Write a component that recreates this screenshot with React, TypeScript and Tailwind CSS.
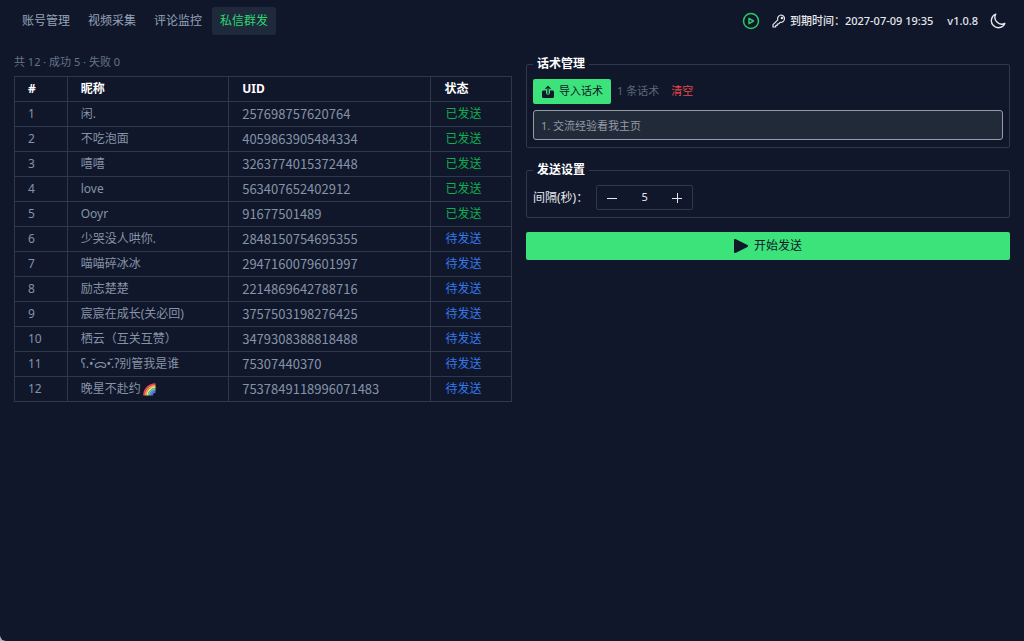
import { useState } from "react";

const tabs = ["账号管理", "视频采集", "评论监控", "私信群发"];

const users = [
  { name: "闲.", uid: "257698757620764", sent: true },
  { name: "不吃泡面", uid: "4059863905484334", sent: true },
  { name: "嘻嘻", uid: "3263774015372448", sent: true },
  { name: "love", uid: "563407652402912", sent: true },
  { name: "Ooyr", uid: "91677501489", sent: true },
  { name: "少哭没人哄你.", uid: "2848150754695355", sent: false },
  { name: "喵喵碎冰冰", uid: "2947160079601997", sent: false },
  { name: "励志楚楚", uid: "2214869642788716", sent: false },
  { name: "宸宸在成长(关必回)", uid: "3757503198276425", sent: false },
  { name: "栖云（互关互赞）", uid: "3479308388818488", sent: false },
  { name: "ʕ.•̆ᯅ•̆.ʔ别管我是谁", uid: "75307440370", sent: false },
  { name: "晚星不赴约", uid: "7537849118996071483", sent: false, rainbow: true },
];

const Rainbow = () => (
  <svg width="13" height="13" viewBox="0 0 13 13" fill="none" strokeWidth="1.7" role="img" aria-label="彩虹">
    <path d="M1 12.5C1 6 6 1 12.5 1" stroke="#e8455a" />
    <path d="M2.6 12.5c0-5.500 4.400-9.900 9.900-9.900" stroke="#f99a4c" />
    <path d="M4.200 12.500c0-4.600 3.700-8.300 8.300-8.300" stroke="#fbe36b" />
    <path d="M5.800 12.500c0-3.700 3-6.700 6.700-6.700" stroke="#5fd4a8" />
    <path d="M7.400 12.500c0-2.800 2.300-5.100 5.100-5.100" stroke="#4a9fea" />
    <path d="M9 12.500c0-1.900 1.600-3.500 3.500-3.500" stroke="#8b62d0" />
  </svg>
);

const Header = () => {
  const [active, setActive] = useState("私信群发");

  return (
    <header className="flex items-center justify-between pt-[7px] px-3.5">
      <nav className="flex gap-0.5">
        {tabs.map((tab) => (
          <button
            key={tab}
            type="button"
            onClick={() => setActive(tab)}
            className={`h-7 px-2 rounded-[3px] ${
              tab === active ? "bg-[#1e293b] text-[#2bd670]" : "text-[#94a3b8]"
            }`}
          >
            {tab}
          </button>
        ))}
      </nav>

      <div className="flex items-center text-[11px] font-medium text-[#e5e7eb]">
        <button type="button" aria-label="教程" className="mr-3 text-[#2bc866]">
          <svg width="18" height="18" viewBox="0 0 18 18" fill="none" stroke="currentColor" strokeWidth="1.5" strokeLinejoin="round">
            <circle cx="9" cy="9" r="7.500" />
            <path d="M7 6.300v5.400L11.500 9z" />
          </svg>
        </button>
        <svg className="mr-1" width="14" height="14" viewBox="0 0 14 14" fill="none" stroke="currentColor" strokeWidth="1.200" strokeLinejoin="round">
          <path d="M9.300 1a3.700 3.700 0 0 0-3.500 4.900L1 10.700V13h2.700v-1.500h1.500V10h1.300l1.600-1.700A3.700 3.700 0 1 0 9.300 1z" />
          <circle cx="10" cy="4" r="0.700" />
        </svg>
        <span>到期时间：2027-07-09 19:35</span>
        <span className="ml-3.5">v1.0.8</span>
        <button type="button" aria-label="切换主题" className="ml-3 mr-1">
          <svg width="16" height="16" viewBox="0 0 16 16" fill="none" stroke="currentColor" strokeWidth="1.400" strokeLinejoin="round">
            <path d="M5.700 1.200a7 7 0 1 0 9.100 9.200A6.800 6.800 0 0 1 5.700 1.200z" />
          </svg>
        </button>
      </div>
    </header>
  );
};

const UserTable = () => (
  <section>
    <p className="h-4 leading-4 text-[11px] text-[#64748b] mb-1.5">共 12 · 成功 5 · 失败 0</p>
    <table className="w-full table-fixed border-collapse text-left">
      <colgroup>
        <col className="w-[10.600%]" />
        <col className="w-[32.500%]" />
        <col className="w-[40.700%]" />
        <col />
      </colgroup>
      <thead>
        <tr className="h-[25px] text-white">
          {["#", "昵称", "UID", "状态"].map((title) => (
            <th key={title} className="border border-[#2c384b] px-[13px] py-0 font-bold leading-6">
              {title}
            </th>
          ))}
        </tr>
      </thead>
      <tbody>
        {users.map((user, index) => (
          <tr key={user.uid} className="h-[25px] text-[#8593a8]">
            <td className="border border-[#2c384b] px-[13px] py-0 leading-6">{index + 1}</td>
            <td className="border border-[#2c384b] px-[13px] py-0 leading-6">
              <div className="flex items-center whitespace-nowrap h-6 overflow-hidden">
                {user.name}
                {user.rainbow && <span className="ml-0.5"><Rainbow /></span>}
              </div>
            </td>
            <td className="border border-[#2c384b] px-[13px] py-0 leading-6 text-[13px] font-['Noto_Sans_CJK_SC',sans-serif]">
              {user.uid}
            </td>
            <td
              className={`border border-[#2c384b] px-3.5 py-0 leading-6 ${
                user.sent ? "text-[#0daf50]" : "text-[#3678ee]"
              }`}
            >
              {user.sent ? "已发送" : "待发送"}
            </td>
          </tr>
        ))}
      </tbody>
    </table>
  </section>
);

const SendPanel = () => {
  const [seconds, setSeconds] = useState(5);
  const [script, setScript] = useState("1. 交流经验看我主页");

  return (
    <section className="pt-[3px]">
      {/* Scripts */}
      <fieldset className="border border-[#2c384b] rounded-xs px-1.5 pt-2 pb-[7px]">
        <legend className="px-1 h-3.5 leading-3.5 font-bold text-white">话术管理</legend>
        <div className="flex items-center text-[11px]">
          <button type="button" className="flex items-center gap-1 h-[25px] px-2 rounded-xs bg-[#3ce37a] text-[#10182a]">
            <svg width="14" height="14" viewBox="0 0 14 14">
              <path d="M2.500 5.500H5v2.300a2 2 0 0 0 4 0V5.500h2.500c.8 0 1.500.7 1.500 1.500v4.500c0 .8-.7 1.500-1.500 1.500h-9C1.700 13 1 12.300 1 11.500V7c0-.8.7-1.500 1.500-1.500z" fill="currentColor" />
              <path d="M7 8.500V1.500M4.800 3.600 7 1.400l2.200 2.200" fill="none" stroke="currentColor" strokeWidth="1.200" strokeLinecap="round" strokeLinejoin="round" />
            </svg>
            导入话术
          </button>
          <span className="ml-1.5 text-[#5a6679]">1 条话术</span>
          <button type="button" className="ml-3 text-[#e5484d]">清空</button>
        </div>
        <input
          type="text"
          aria-label="话术"
          value={script}
          onChange={(e) => setScript(e.target.value)}
          className="block w-full h-[30px] mt-1.5 px-[7px] rounded-[3px] border border-[#959ca6] bg-[#212a38] text-[11px] text-[#949ba7] outline-none"
        />
      </fieldset>

      {/* Send settings */}
      <fieldset className="mt-[15px] border border-[#2c384b] rounded-xs px-1.5 pt-2 pb-[7px]">
        <legend className="px-1 h-3.5 leading-3.5 font-bold text-white">发送设置</legend>
        <div className="flex items-center text-[#e5e7eb]">
          <label htmlFor="seconds">间隔(秒)：</label>
          <div className="flex items-center ml-2 w-[97px] h-[25px] rounded-xs border border-[#2c384b]">
            <button type="button" aria-label="减少" onClick={() => setSeconds(seconds - 1)} className="grid place-items-center w-[30px] h-full">
              <svg width="10" height="10" viewBox="0 0 10 10" stroke="currentColor">
                <path d="M0 5.500h10" />
              </svg>
            </button>
            <input
              id="seconds"
              type="text"
              inputMode="numeric"
              value={seconds}
              onChange={(e) => setSeconds(Number(e.target.value) || 0)}
              className="flex-1 min-w-0 text-center text-[11px] bg-transparent outline-none"
            />
            <button type="button" aria-label="增加" onClick={() => setSeconds(seconds + 1)} className="grid place-items-center w-[30px] h-full">
              <svg width="10" height="10" viewBox="0 0 10 10" stroke="currentColor">
                <path d="M0 5.500h10M5.500 0v10" />
              </svg>
            </button>
          </div>
        </div>
      </fieldset>

      <button type="button" className="flex items-center justify-center gap-1.5 w-full h-7 mt-3.5 rounded-xs bg-[#3ce37a] text-[#10182a]">
        <svg width="14" height="14" viewBox="0 0 14 14" fill="currentColor" stroke="currentColor" strokeWidth="2" strokeLinejoin="round">
          <path d="M1 1v12l12-6z" />
        </svg>
        开始发送
      </button>
    </section>
  );
};

const App = () => {
  return (
    <div className="bg-[#b5b5b5]">
      <div className="min-h-screen rounded-bl-md bg-[#10172a] text-xs font-['Noto_Sans','Noto_Sans_CJK_SC',sans-serif]">
        <Header />
        <main className="grid grid-cols-[498fr_484fr] items-start gap-3.5 px-3.5 pt-[19px]">
          <UserTable />
          <SendPanel />
        </main>
      </div>
    </div>
  );
};

export default App;
